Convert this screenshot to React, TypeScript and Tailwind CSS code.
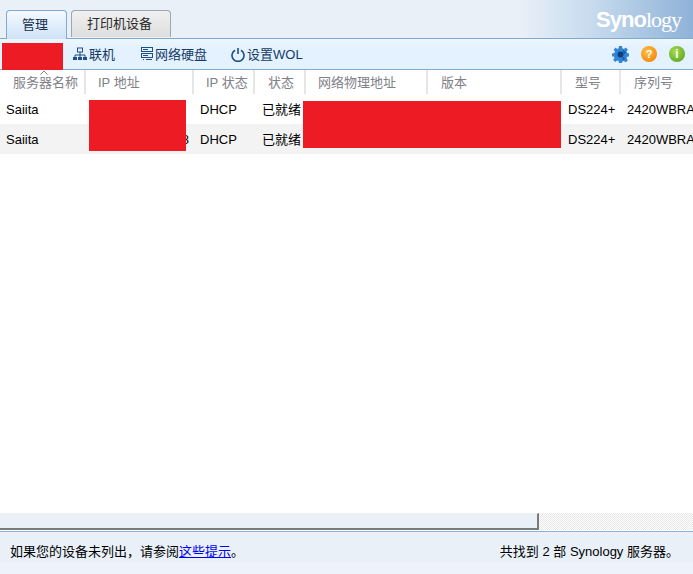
import React from 'react';

const FONT = "[font-family:'Liberation_Sans','Noto_Sans_CJK_SC',sans-serif]";

const columns = [
    { label: '服务器名称', width: 'w-[86px]', pad: 'pl-[13px]' },
    { label: 'IP 地址', width: 'w-[108px]', pad: 'pl-[12px]' },
    { label: 'IP 状态', width: 'w-[61px]', pad: 'pl-[12px]' },
    { label: '状态', width: 'w-[51px]', pad: 'pl-[13px]' },
    { label: '网络物理地址', width: 'w-[122px]', pad: 'pl-[12px]' },
    { label: '版本', width: 'w-[134px]', pad: 'pl-[13px]' },
    { label: '型号', width: 'w-[59px]', pad: 'pl-[13px]' },
    { label: '序列号', width: 'w-[72px]', pad: 'pl-[13px]' },
];

const NetworkIcon = () => (
    <svg width="14" height="14" viewBox="0 0 14 14" fill="none" className="text-[#1f4f86]">
        <rect x="4.5" y="1" width="5" height="4" stroke="currentColor" />
        <path d="M7 5v3M2 10V8h10v2M7 8v2" stroke="currentColor" />
        <rect x="0" y="10" width="4" height="3" fill="currentColor" />
        <rect x="5" y="10" width="4" height="3" fill="currentColor" />
        <rect x="10" y="10" width="4" height="3" fill="currentColor" />
    </svg>
);

const ServerIcon = () => (
    <svg width="12" height="14" viewBox="0 0 12 14" fill="none" className="text-[#1f4f86]">
        <rect x="0.5" y="0.5" width="11" height="4" stroke="currentColor" />
        <rect x="0.5" y="6.5" width="11" height="4" stroke="currentColor" />
        <path d="M2 12.5h1M2 2.5h5M2 8.5h5M5 12.5h6" stroke="currentColor" />
    </svg>
);

const PowerIcon = () => (
    <svg width="14" height="15" viewBox="0 0 14 15" fill="none" className="text-[#1f4f86]">
        <path d="M4 3.2a6 6 0 1 0 6 0" stroke="currentColor" strokeWidth="1.6" />
        <path d="M7 1v6" stroke="currentColor" strokeWidth="1.6" />
    </svg>
);

const GearIcon = () => (
    <svg width="17" height="17" viewBox="0 0 17 17">
        <path d="M7 0h3l.4 2.3 1.5.6L13.8 1.6 15.9 3.7 14.5 5.6l.6 1.4 1.9.4v3l-1.9.4-.6 1.500 1.400 1.900-2.100 2.100-1.900-1.400-1.500.6L10 17H7l-.4-1.900-1.500-.6-1.900 1.400-2.100-2.100 1.400-1.900-.6-1.500L0 10.400v-3l2.400-.4.6-1.400L1.600 3.700 3.700 1.600 5.100 2.900 6.600 2.300z" fill="#2f86d8" />
        <circle cx="8.500" cy="8.500" r="3" fill="#123f73" />
        <path d="M11 4l3 2-1 2-2-1zM11 11l2 1-1 2-2-1z" fill="#1b5c9c" />
    </svg>
);

const ToolButton = ({ icon, label, className }: { icon: React.ReactNode; label: string; className: string }) => (
    <div className={`flex items-center gap-[2px] text-[13px] text-[#163a68] ${className}`}>
        {icon}
        <span className="pt-[2px]">{label}</span>
    </div>
);

const Row = ({ striped, ipTail }: { striped?: boolean; ipTail?: string }) => (
    <div className={`flex h-[30px] items-center pt-[2px] text-[13px] text-black whitespace-nowrap ${striped ? 'bg-[#f3f3f3]' : 'bg-white'}`}>
        <div className="w-[86px] shrink-0 pl-[6px]">Saiita</div>
        <div className="w-[108px] shrink-0 pr-[5px] text-right">{ipTail}</div>
        <div className="w-[68px] shrink-0 pl-[6px]">DHCP</div>
        <div className="w-[306px] shrink-0">已就绪</div>
        <div className="w-[59px] shrink-0">DS224+</div>
        <div className="shrink-0">2420WBRA</div>
    </div>
);

export default function App() {
    return (
        <div className={`flex h-[574px] w-[693px] flex-col overflow-hidden bg-white ${FONT}`}>
            {/* Tabs and logo */}
            <div className="flex h-[39px] shrink-0 items-end border-b border-[#7fabd0] bg-[linear-gradient(90deg,#e9f0f8_0%,#e9f0f8_75%,#c8dcee_85%,#8fb2d8_100%)] pl-[6px] pr-[12px]">
                <div className="-mb-px flex h-[29px] w-[61px] items-center justify-center rounded-t-[4px] border border-b-0 border-[#7fabd0] bg-[linear-gradient(180deg,#f4f9ff_0%,#cfe3f7_100%)] pr-[3px] text-[13px] text-[#16304f]">
                    管理
                </div>
                <div className="mb-px ml-[4px] flex h-[27px] w-[100px] items-center justify-center rounded-t-[4px] border border-b-0 border-[#9aa7b4] bg-[linear-gradient(180deg,#f0f0f0_0%,#dedede_100%)] pr-[3px] text-[13px] text-[#2a2a2a]">
                    打印机设备
                </div>
                <div className="mb-[3px] ml-auto flex items-baseline self-end pb-[2px] text-[22px] leading-[26px] tracking-[-1px] text-white">
                    <span className="font-bold">Syno</span>
                    <span className="[font-family:'Liberation_Serif',serif]">logy</span>
                </div>
            </div>

            {/* Toolbar */}
            <div className="relative flex h-[31px] shrink-0 items-center border-b border-[#7fabd0] bg-[linear-gradient(180deg,#edf6fd_0%,#e3f2fe_30%)] pr-[8px]">
                <div className="absolute left-[2px] top-[4px] h-[27px] w-[61px] bg-[#ed1c24]" />
                <ToolButton icon={<NetworkIcon />} label="联机" className="ml-[73px]" />
                <ToolButton icon={<ServerIcon />} label="网络硬盘" className="ml-[26px]" />
                <ToolButton icon={<PowerIcon />} label="设置WOL" className="ml-[24px]" />
                <div className="ml-auto flex items-center gap-[12px]">
                    <GearIcon />
                    <div className="flex h-[16px] w-[16px] items-center justify-center rounded-full bg-[radial-gradient(circle_at_40%_35%,#ffc040,#f07808)] text-[11px] font-bold text-white">?</div>
                    <div className="flex h-[16px] w-[16px] items-center justify-center rounded-full bg-[radial-gradient(circle_at_40%_35%,#a8dc50,#4c9c18)] text-[12px] font-bold text-white">i</div>
                </div>
            </div>

            {/* Table */}
            <div className="relative min-h-0 flex-1 overflow-hidden">
                <div className="flex h-[24px] text-[13px] text-[#7f8188] whitespace-nowrap">
                    {columns.map((col) => (
                        <div key={col.label} className={`flex h-[24px] shrink-0 items-center border-r-2 border-[#e6e6e6] pt-[2px] last:border-r-0 ${col.width} ${col.pad}`}>
                            {col.label}
                        </div>
                    ))}
                </div>
                <svg width="8" height="5" viewBox="0 0 8 5" fill="none" className="absolute left-[40px] top-[0px]">
                    <path d="M0.500 4.500 4 1l3.500 3.500" stroke="#808080" />
                </svg>
                <Row />
                <Row striped ipTail="8" />
                {/* Redacted cells */}
                <div className="absolute left-[89px] top-[30px] h-[51px] w-[97px] bg-[#ed1c24]" />
                <div className="absolute left-[303px] top-[31px] h-[47px] w-[258px] bg-[#ed1c24]" />
            </div>

            {/* Horizontal scrollbar */}
            <div className="flex h-[17px] shrink-0 bg-[repeating-conic-gradient(#e6e6e6_0_25%,#ffffff_0_50%)] bg-[length:2px_2px]">
                <div className="h-full w-[539px] border-b-2 border-r-2 border-t border-b-[#7a7a7a] border-r-[#7a7a7a] border-t-[#efefef] bg-[#e9f0f8]" />
            </div>

            {/* Footer */}
            <div className="mt-px flex h-[43px] shrink-0 items-start justify-between border-t border-[#8fb2d0] bg-[linear-gradient(180deg,#e9f0f8_0%,#e9f0f8_72%,#edf2fb_72%)] pl-[10px] pr-[14px] pt-[12px] text-[13px] leading-[16px] text-black">
                <div>
                    如果您的设备未列出，请参阅<a href="#" className="text-[#0000ee] underline">这些提示</a>。
                </div>
                <div>共找到 2 部 Synology 服务器。</div>
            </div>
        </div>
    );
}
